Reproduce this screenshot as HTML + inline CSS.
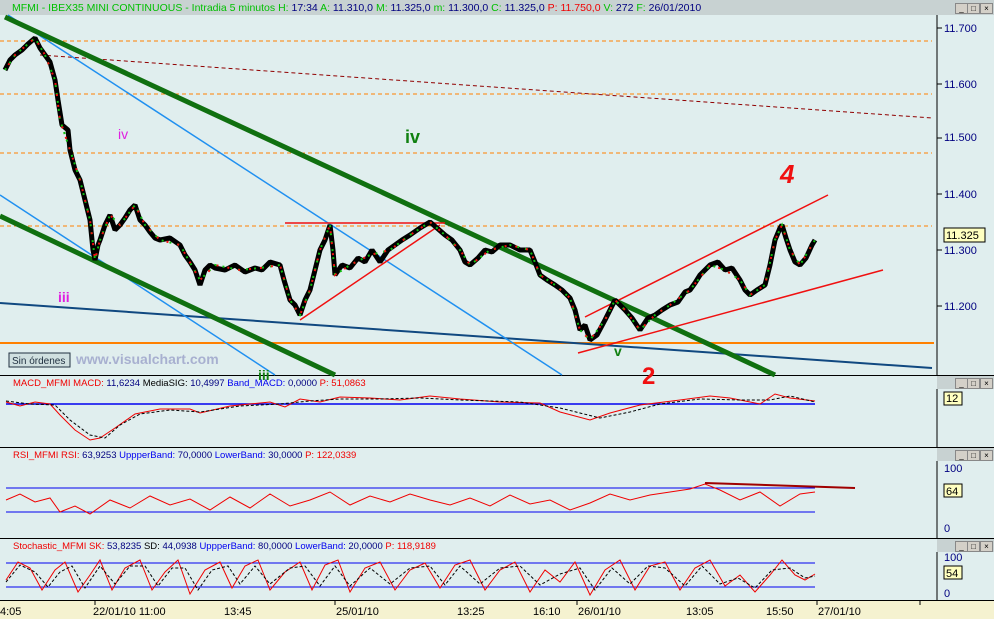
<!DOCTYPE html>
<html><head><meta charset="utf-8"><style>
body{margin:0;width:994px;height:619px;overflow:hidden;background:#e0eeee;font-family:"Liberation Sans",sans-serif;position:relative}
.a{position:absolute}
.btn{position:absolute;width:11px;height:9px;border:1px solid #888;background:#d4d0c8;font-size:8px;line-height:9px;text-align:center;color:#000}
</style></head><body>
<svg class="a" style="left:0;top:0" width="994" height="619" viewBox="0 0 994 619">
<rect x="0" y="0" width="994" height="15" fill="#c8d2d2"/>
<text x="12" y="11" font-size="10.5" font-family="Liberation Sans" fill="#00c000">MFMI - IBEX35 MINI CONTINUOUS - Intradia 5 minutos <tspan fill="#00c000">H:</tspan><tspan fill="#000080"> 17:34 </tspan><tspan fill="#00c000">A:</tspan><tspan fill="#000080"> 11.310,0 </tspan><tspan fill="#00c000">M:</tspan><tspan fill="#000080"> 11.325,0 </tspan><tspan fill="#00c000">m:</tspan><tspan fill="#000080"> 11.300,0 </tspan><tspan fill="#00c000">C:</tspan><tspan fill="#000080"> 11.325,0 </tspan><tspan fill="#f00000">P: 11.750,0 </tspan><tspan fill="#00c000">V:</tspan><tspan fill="#000080"> 272 </tspan><tspan fill="#00c000">F:</tspan><tspan fill="#000080"> 26/01/2010</tspan></text>
<line x1="937" y1="15" x2="937" y2="600" stroke="#000"/>
<line x1="0" y1="375.5" x2="994" y2="375.5" stroke="#000"/>
<rect x="0" y="376" width="994" height="13" fill="#c8d2d2"/>
<line x1="0" y1="447.5" x2="994" y2="447.5" stroke="#000"/>
<rect x="0" y="448" width="994" height="13" fill="#c8d2d2"/>
<line x1="0" y1="538.5" x2="994" y2="538.5" stroke="#000"/>
<rect x="0" y="539" width="994" height="13" fill="#c8d2d2"/>
<line x1="0" y1="600.5" x2="994" y2="600.5" stroke="#000"/>
<rect x="0" y="601" width="994" height="18" fill="#f5f2d0"/>
<rect x="0" y="376" width="937" height="13" fill="#e0eeee"/>
<rect x="0" y="448" width="937" height="13" fill="#e0eeee"/>
<rect x="0" y="539" width="937" height="13" fill="#e0eeee"/>
<g stroke="#ff8000" stroke-dasharray="4,3" stroke-width="1">
<line x1="0" y1="41" x2="932" y2="41"/><line x1="0" y1="94" x2="932" y2="94"/>
<line x1="0" y1="153" x2="932" y2="153"/><line x1="0" y1="226" x2="932" y2="226"/>
</g>
<line x1="40" y1="55" x2="932" y2="118" stroke="#900000" stroke-dasharray="4,3"/>
<line x1="0" y1="343" x2="934" y2="343" stroke="#ff8000" stroke-width="2"/>
<line x1="0" y1="303" x2="932" y2="368" stroke="#104880" stroke-width="2"/>
<g stroke="#2090f0" stroke-width="1.5"><line x1="8" y1="15" x2="562" y2="375"/><line x1="0" y1="195" x2="275" y2="375"/></g>
<g stroke="#107010" stroke-width="5"><line x1="5" y1="17" x2="775" y2="375"/><line x1="0" y1="216" x2="335" y2="375"/></g>
<g stroke="#f01010" stroke-width="1.5"><line x1="285" y1="223" x2="445" y2="223"/><line x1="300" y1="320" x2="440" y2="225"/>
<line x1="578" y1="353" x2="883" y2="270"/><line x1="585" y1="317" x2="828" y2="195"/></g>
<polyline fill="none" stroke="#000" stroke-width="5" stroke-linejoin="bevel" points="5,70 10,60 15,55 22,50 28,44 35,38 40,48 45,55 50,62 55,80 58,100 62,125 68,130 70,150 75,170 80,180 85,200 90,220 93,250 95,260 98,245 100,240 105,225 110,215 115,230 120,225 125,218 130,210 135,205 140,220 145,225 150,232 155,238 160,240 170,238 180,245 185,255 190,262 195,270 200,285 205,270 210,265 215,268 225,270 235,265 245,272 255,268 262,270 270,262 280,265 284,280 290,300 295,305 300,315 305,300 310,290 315,270 320,250 325,240 330,225 333,250 335,275 342,265 350,268 358,258 365,262 372,250 380,262 388,250 395,245 402,240 410,235 420,228 430,222 437,228 445,235 452,240 460,250 465,262 470,265 478,258 485,250 492,252 500,245 510,245 520,250 530,250 535,262 540,275 547,280 555,285 562,290 570,298 575,310 580,330 585,325 590,340 597,335 605,320 610,310 615,300 620,305 625,310 632,318 640,330 648,318 655,315 662,310 670,305 678,302 685,292 690,290 695,283 700,275 710,265 718,262 725,270 732,268 740,280 745,290 750,295 757,290 765,285 770,265 775,240 780,228 782,225 786,238 790,250 795,262 800,265 806,258 812,245 815,240"/>
<polyline fill="none" stroke="#10c010" stroke-width="2" stroke-dasharray="2,6" points="5,70 15,55 35,38 45,55 55,80 60,120 70,150 80,180 90,220 95,260 100,240 110,215 120,225 135,205 145,225 160,240 180,245 200,280 215,265 240,270 260,268 280,265 290,300 300,315 310,290 320,250 330,225 335,275 350,265 370,255 390,250 410,235 430,222 445,235 460,250 470,265 490,250 510,245 530,250 540,275 555,285 570,298 580,330 590,340 605,320 615,300 625,310 640,330 655,315 670,305 690,290 710,265 725,270 740,280 750,295 765,285 775,240 782,225 790,250 800,265 815,240"/>
<polyline fill="none" stroke="#f01010" stroke-width="2" stroke-dasharray="2,9" stroke-dashoffset="5" points="5,70 15,55 35,38 45,55 55,80 60,120 70,150 80,180 90,220 95,260 100,240 110,215 120,225 135,205 145,225 160,240 180,245 200,280 215,265 240,270 260,268 280,265 290,300 300,315 310,290 320,250 330,225 335,275 350,265 370,255 390,250 410,235 430,222 445,235 460,250 470,265 490,250 510,245 530,250 540,275 555,285 570,298 580,330 590,340 605,320 615,300 625,310 640,330 655,315 670,305 690,290 710,265 725,270 740,280 750,295 765,285 775,240 782,225 790,250 800,265 815,240"/>
<text x="118" y="139" font-size="14" fill="#e020e0">iv</text>
<text x="405" y="143" font-size="18" font-weight="bold" fill="#108010">iv</text>
<text x="58" y="302" font-size="14" font-weight="bold" fill="#e020e0">iii</text>
<text x="780" y="183" font-size="26" font-weight="bold" font-style="italic" fill="#f01010">4</text>
<text x="614" y="356" font-size="14" font-weight="bold" fill="#108010">v</text>
<text x="642" y="384" font-size="24" font-weight="bold" fill="#f01010">2</text>
<text x="258" y="380" font-size="14" font-weight="bold" fill="#108010">iii</text>
<rect x="9" y="353" width="61" height="14" fill="#d0e0e0" stroke="#203040"/>
<text x="12" y="364" font-size="10" fill="#203040">Sin órdenes</text>
<text x="76" y="364" font-size="14" font-weight="bold" fill="#a8b0d0">www.visualchart.com</text>
<g font-size="11" fill="#000080"><text x="944" y="32">11.700</text><text x="944" y="88">11.600</text><text x="944" y="141">11.500</text><text x="944" y="198">11.400</text><text x="944" y="254">11.300</text><text x="944" y="310">11.200</text></g>
<g stroke="#000"><line x1="937" y1="28" x2="942" y2="28"/><line x1="937" y1="84" x2="942" y2="84"/><line x1="937" y1="138" x2="942" y2="138"/><line x1="937" y1="194" x2="942" y2="194"/><line x1="937" y1="250" x2="942" y2="250"/><line x1="937" y1="306" x2="942" y2="306"/></g>
<rect x="944" y="228" width="41" height="14" fill="#ffffc0" stroke="#000"/><text x="946" y="239" font-size="11" fill="#000">11.325</text>
<text x="13" y="386" font-size="9.5" fill="#f00000">MACD_MFMI <tspan fill="#f00000">MACD:</tspan><tspan fill="#000080"> 11,6234 </tspan><tspan fill="#000">MediaSIG:</tspan><tspan fill="#000080"> 10,4997 </tspan><tspan fill="#0000f0">Band_MACD:</tspan><tspan fill="#000080"> 0,0000 </tspan>P: 51,0863</text>
<line x1="6" y1="404" x2="815" y2="404" stroke="#0000f0" stroke-width="1.5"/>
<polyline fill="none" stroke="#f00000" points="6,402 20,406 35,402 50,404 60,415 75,430 90,440 100,438 115,428 135,414 160,409 190,409 200,413 230,406 270,402 285,407 300,399 320,402 340,397 370,398 400,400 430,396 460,399 500,402 540,403 560,412 590,420 610,413 640,405 680,400 710,396 730,398 760,404 775,394 790,398 815,401"/>
<polyline fill="none" stroke="#000" stroke-dasharray="3,2" points="6,401 30,404 55,405 70,420 90,435 105,438 120,425 140,414 170,410 200,412 240,406 280,404 310,401 340,399 380,399 420,398 460,400 520,402 560,408 600,418 630,412 660,404 700,399 740,400 770,400 790,396 815,402"/>
<rect x="944" y="392" width="18" height="13" fill="#ffffc0" stroke="#000"/><text x="946" y="402" font-size="11">12</text>
<text x="13" y="458" font-size="9.5" fill="#f00000">RSI_MFMI <tspan>RSI:</tspan><tspan fill="#000080"> 63,9253 </tspan><tspan fill="#0000f0">UppperBand:</tspan><tspan fill="#000080"> 70,0000 </tspan><tspan fill="#0000f0">LowerBand:</tspan><tspan fill="#000080"> 30,0000 </tspan>P: 122,0339</text>
<line x1="6" y1="488" x2="815" y2="488" stroke="#0000f0"/><line x1="6" y1="512" x2="815" y2="512" stroke="#0000f0"/>
<polyline fill="none" stroke="#f00000" points="6,500 20,494 35,502 50,498 60,512 75,506 90,514 110,500 130,508 150,496 170,505 190,499 210,510 230,497 250,508 270,494 290,506 310,500 330,492 350,505 370,496 390,502 410,494 430,500 450,505 470,498 490,506 510,495 530,504 550,500 570,510 590,503 610,494 630,500 650,495 670,492 690,489 705,484 720,490 740,500 760,492 780,506 800,494 815,492"/>
<line x1="705" y1="483" x2="855" y2="488" stroke="#a00000" stroke-width="2"/>
<g font-size="11" fill="#000080"><text x="944" y="472">100</text><text x="944" y="532">0</text></g>
<rect x="944" y="484" width="18" height="13" fill="#ffffc0" stroke="#000"/><text x="946" y="495" font-size="11">64</text>
<text x="13" y="549" font-size="9.5" fill="#f00000">Stochastic_MFMI <tspan>SK:</tspan><tspan fill="#000080"> 53,8235 </tspan><tspan fill="#000">SD:</tspan><tspan fill="#000080"> 44,0938 </tspan><tspan fill="#0000f0">UppperBand:</tspan><tspan fill="#000080"> 80,0000 </tspan><tspan fill="#0000f0">LowerBand:</tspan><tspan fill="#000080"> 20,0000 </tspan>P: 118,9189</text>
<line x1="6" y1="563" x2="815" y2="563" stroke="#0000f0"/><line x1="6" y1="587" x2="815" y2="587" stroke="#0000f0"/>
<polyline fill="none" stroke="#f00000" points="6,580 18,562 30,568 42,590 55,570 65,562 78,592 90,575 100,560 112,590 125,568 140,560 152,590 165,572 178,560 190,594 205,570 220,562 232,588 245,566 258,560 270,590 285,572 300,562 312,590 325,565 338,560 350,592 365,568 380,562 395,590 410,570 425,563 440,588 455,565 470,560 485,590 500,570 515,562 530,592 545,570 560,582 575,562 590,595 605,570 620,560 635,590 650,566 665,562 680,590 695,568 710,560 725,586 740,575 755,592 770,575 782,560 795,575 805,580 815,574"/>
<polyline fill="none" stroke="#000" stroke-dasharray="3,2" points="6,582 20,565 35,572 48,587 60,572 72,566 85,588 100,566 115,584 130,566 145,566 158,586 172,568 185,568 198,590 212,570 228,566 240,584 255,566 270,584 290,568 305,566 320,586 335,566 350,586 370,568 390,584 410,568 430,566 445,585 460,566 480,584 500,568 520,566 540,585 560,574 580,568 595,590 612,568 630,584 648,566 665,568 685,586 702,566 720,584 738,578 755,588 772,570 790,568 805,578 815,576"/>
<g font-size="11" fill="#000080"><text x="944" y="561">100</text><text x="944" y="597">0</text></g>
<rect x="944" y="566" width="18" height="13" fill="#ffffc0" stroke="#000"/><text x="946" y="577" font-size="11">54</text>
<g font-size="11" fill="#000"><text x="0" y="615">4:05</text><text x="93" y="615">22/01/10 11:00</text><text x="224" y="615">13:45</text><text x="336" y="615">25/01/10</text><text x="457" y="615">13:25</text><text x="533" y="615">16:10</text><text x="578" y="615">26/01/10</text><text x="686" y="615">13:05</text><text x="766" y="615">15:50</text><text x="818" y="615">27/01/10</text></g>
<g stroke="#000"><line x1="95" y1="601" x2="95" y2="605"/><line x1="335" y1="601" x2="335" y2="605"/><line x1="577" y1="601" x2="577" y2="605"/><line x1="817" y1="601" x2="817" y2="605"/><line x1="920" y1="601" x2="920" y2="605"/></g>
</svg>
<div class="btn" style="left:955px;top:3px">_</div><div class="btn" style="left:967px;top:3px">□</div><div class="btn" style="left:980px;top:3px">×</div>
<div class="btn" style="left:955px;top:378px">_</div><div class="btn" style="left:967px;top:378px">□</div><div class="btn" style="left:980px;top:378px">×</div>
<div class="btn" style="left:955px;top:450px">_</div><div class="btn" style="left:967px;top:450px">□</div><div class="btn" style="left:980px;top:450px">×</div>
<div class="btn" style="left:955px;top:541px">_</div><div class="btn" style="left:967px;top:541px">□</div><div class="btn" style="left:980px;top:541px">×</div>
</body></html>
